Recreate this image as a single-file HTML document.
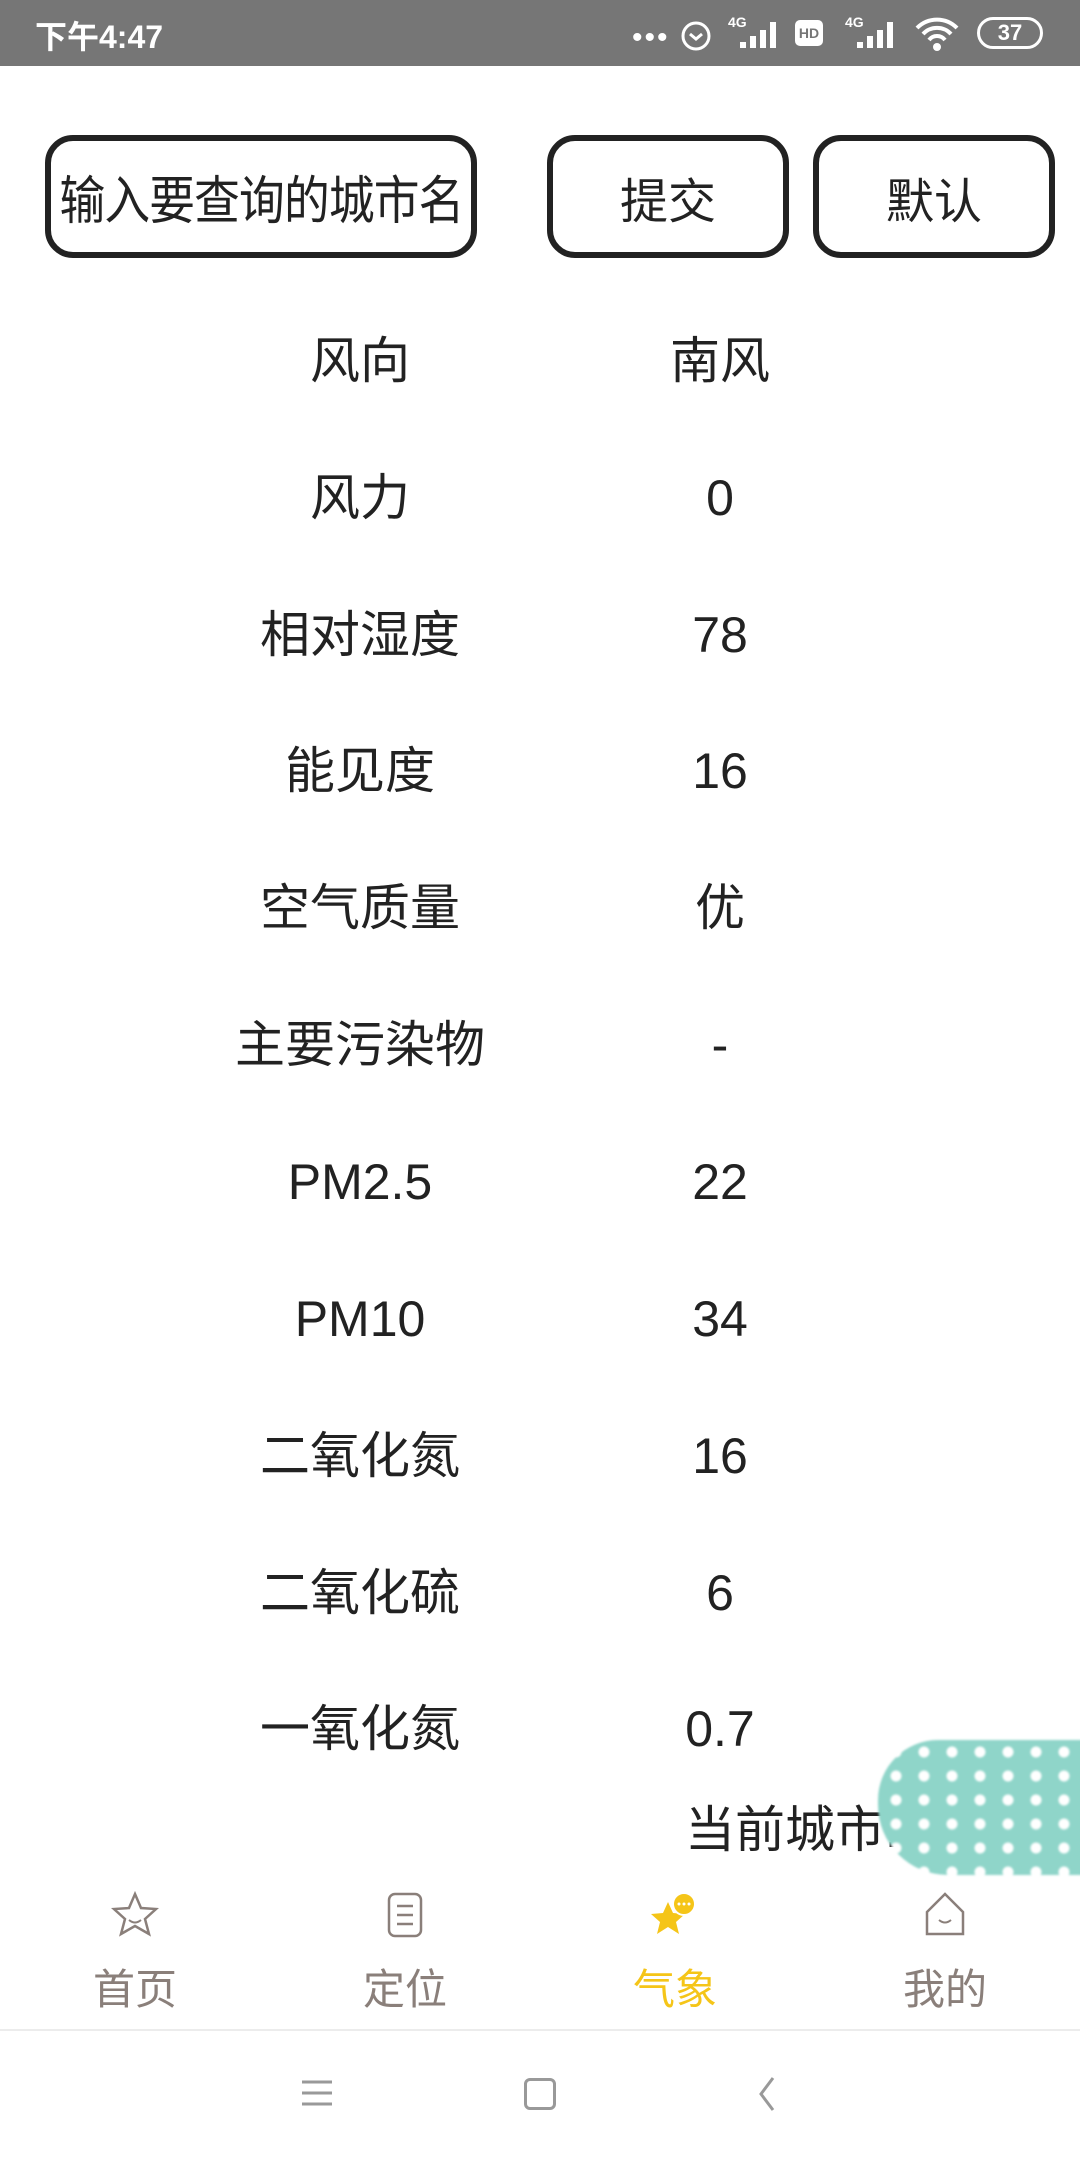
<!DOCTYPE html>
<html><head><meta charset="utf-8"><style>
*{margin:0;padding:0;box-sizing:border-box}
body{width:1080px;height:2160px;background:#fff;position:relative;overflow:hidden;font-family:"Liberation Sans","Noto Sans CJK SC",sans-serif;color:#222}
.sb{position:absolute;left:0;top:0;width:1080px;height:66px;background:#767676;color:#fff}
.btn{position:absolute;top:135px;height:123px;border:6px solid #222;border-radius:28px;display:flex;align-items:center;justify-content:center;color:#222;white-space:nowrap;overflow:visible}
.row{position:absolute;font-size:50px;line-height:60px;text-align:center;width:400px}
.tab{position:absolute;top:1890px;width:200px;text-align:center;color:#8a7f7a;font-size:42px}
</style></head><body>
<div class="sb">
 <div style="position:absolute;left:35px;top:12px;font-size:32px;font-weight:bold">下午4:47</div>
 <div style="position:absolute;left:632px;top:28px;font-size:30px;letter-spacing:2px;line-height:20px">•••</div>
 <svg style="position:absolute;left:676px;top:14px" width="40" height="40" viewBox="0 0 40 40"><circle cx="20" cy="22" r="13" fill="none" stroke="#fff" stroke-width="3"/><path d="M14 20l6 5 6-5" stroke="#fff" stroke-width="3" fill="none"/></svg>
 <div style="position:absolute;left:728px;top:14px;font-size:14px;font-weight:bold">4G</div>
 <svg style="position:absolute;left:738px;top:18px" width="44" height="32"><path d="M2 30h6v-6h-6zM12 30h6v-12h-6zM22 30h6v-18h-6zM32 30h6v-26h-6z" fill="#fff"/></svg>
 <div style="position:absolute;left:795px;top:20px;width:28px;height:26px;background:#fff;border-radius:5px;color:#767676;font-size:14px;font-weight:bold;text-align:center;line-height:26px">HD</div>
 <div style="position:absolute;left:845px;top:14px;font-size:14px;font-weight:bold">4G</div>
 <svg style="position:absolute;left:855px;top:18px" width="44" height="32"><path d="M2 30h6v-6h-6zM12 30h6v-12h-6zM22 30h6v-18h-6zM32 30h6v-26h-6z" fill="#fff"/></svg>
 <svg style="position:absolute;left:914px;top:16px" width="46" height="36" viewBox="0 0 46 36"><path d="M3 12a28 28 0 0 1 40 0M9 18a19 19 0 0 1 28 0M15 24a10 10 0 0 1 16 0" stroke="#fff" stroke-width="4" fill="none"/><circle cx="23" cy="31" r="4" fill="#fff"/></svg>
 <div style="position:absolute;left:977px;top:17px;width:66px;height:32px;border:3px solid #fff;border-radius:16px;font-size:22px;font-weight:bold;text-align:center;line-height:26px">37</div>
</div>
<div class="btn" style="left:45px;width:432px;font-size:52px"><span style="display:inline-block;transform:scaleX(0.88);letter-spacing:-1px">输入要查询的城市名</span></div>
<div class="btn" style="left:547px;width:242px;font-size:48px">提交</div>
<div class="btn" style="left:813px;width:242px;font-size:48px">默认</div>

<div class="row" style="left:160px;top:331px">风向</div><div class="row" style="left:520px;top:331px">南风</div>
<div class="row" style="left:160px;top:468px">风力</div><div class="row" style="left:520px;top:468px">0</div>
<div class="row" style="left:160px;top:605px">相对湿度</div><div class="row" style="left:520px;top:605px">78</div>
<div class="row" style="left:160px;top:741px">能见度</div><div class="row" style="left:520px;top:741px">16</div>
<div class="row" style="left:160px;top:878px">空气质量</div><div class="row" style="left:520px;top:878px">优</div>
<div class="row" style="left:160px;top:1015px">主要污染物</div><div class="row" style="left:520px;top:1015px">-</div>
<div class="row" style="left:160px;top:1152px">PM2.5</div><div class="row" style="left:520px;top:1152px">22</div>
<div class="row" style="left:160px;top:1289px">PM10</div><div class="row" style="left:520px;top:1289px">34</div>
<div class="row" style="left:160px;top:1426px">二氧化氮</div><div class="row" style="left:520px;top:1426px">16</div>
<div class="row" style="left:160px;top:1563px">二氧化硫</div><div class="row" style="left:520px;top:1563px">6</div>
<div class="row" style="left:160px;top:1699px">一氧化氮</div><div class="row" style="left:520px;top:1699px">0.7</div>

<div style="position:absolute;left:685px;top:1800px;font-size:50px;line-height:60px">当前城市:</div>
<div style="position:absolute;left:878px;top:1740px;width:220px;height:135px;border-radius:60px 0 0 70px;background-color:#8fd5c9;background-image:radial-gradient(circle,#fff 5px,transparent 6px);background-size:28px 24px;background-position:4px 0;filter:blur(1px)"></div>

<div class="tab" style="left:35px"><svg width="48" height="48" viewBox="0 0 48 48"><path d="M24 4l6 14 15 1-11 10 4 15-14-8-14 8 4-15-11-10 15-1z" fill="none" stroke="#8a7f7a" stroke-width="2.5"/><path d="M18 30q6 5 12 0" stroke="#8a7f7a" stroke-width="2" fill="none"/></svg><div style="margin-top:8px">首页</div></div>
<div class="tab" style="left:305px"><svg width="48" height="48" viewBox="0 0 48 48"><rect x="8" y="4" width="32" height="42" rx="6" fill="none" stroke="#8a7f7a" stroke-width="2.5"/><path d="M16 16h16M16 25h16M16 34h16" stroke="#8a7f7a" stroke-width="2.5"/></svg><div style="margin-top:8px">定位</div></div>
<div class="tab" style="left:575px;color:#f5c518"><svg width="54" height="48" viewBox="0 0 54 48"><path d="M20 12l5 11 12 1-9 8 3 12-11-7-11 7 3-12-9-8 12-1z" fill="#f5c518"/><circle cx="36" cy="14" r="11" fill="#f5c518" stroke="#fff" stroke-width="2"/><circle cx="31" cy="14" r="1.5" fill="#fff"/><circle cx="36" cy="14" r="1.5" fill="#fff"/><circle cx="41" cy="14" r="1.5" fill="#fff"/></svg><div style="margin-top:8px">气象</div></div>
<div class="tab" style="left:845px"><svg width="48" height="48" viewBox="0 0 48 48"><path d="M24 4l18 18v22h-36v-22z" fill="none" stroke="#8a7f7a" stroke-width="2.5"/><path d="M18 30q6 5 12 0" stroke="#8a7f7a" stroke-width="2" fill="none"/></svg><div style="margin-top:8px">我的</div></div>

<div style="position:absolute;left:0;top:2029px;width:1080px;height:2px;background:#ececec"></div>
<svg style="position:absolute;left:300px;top:2076px" width="34" height="34"><path d="M2 6h30M2 17h30M2 28h30" stroke="#999" stroke-width="3"/></svg>
<div style="position:absolute;left:524px;top:2078px;width:32px;height:32px;border:3px solid #999;border-radius:6px"></div>
<svg style="position:absolute;left:755px;top:2076px" width="24" height="36"><path d="M18 2L6 18l12 16" stroke="#999" stroke-width="3" fill="none"/></svg>
</body></html>
